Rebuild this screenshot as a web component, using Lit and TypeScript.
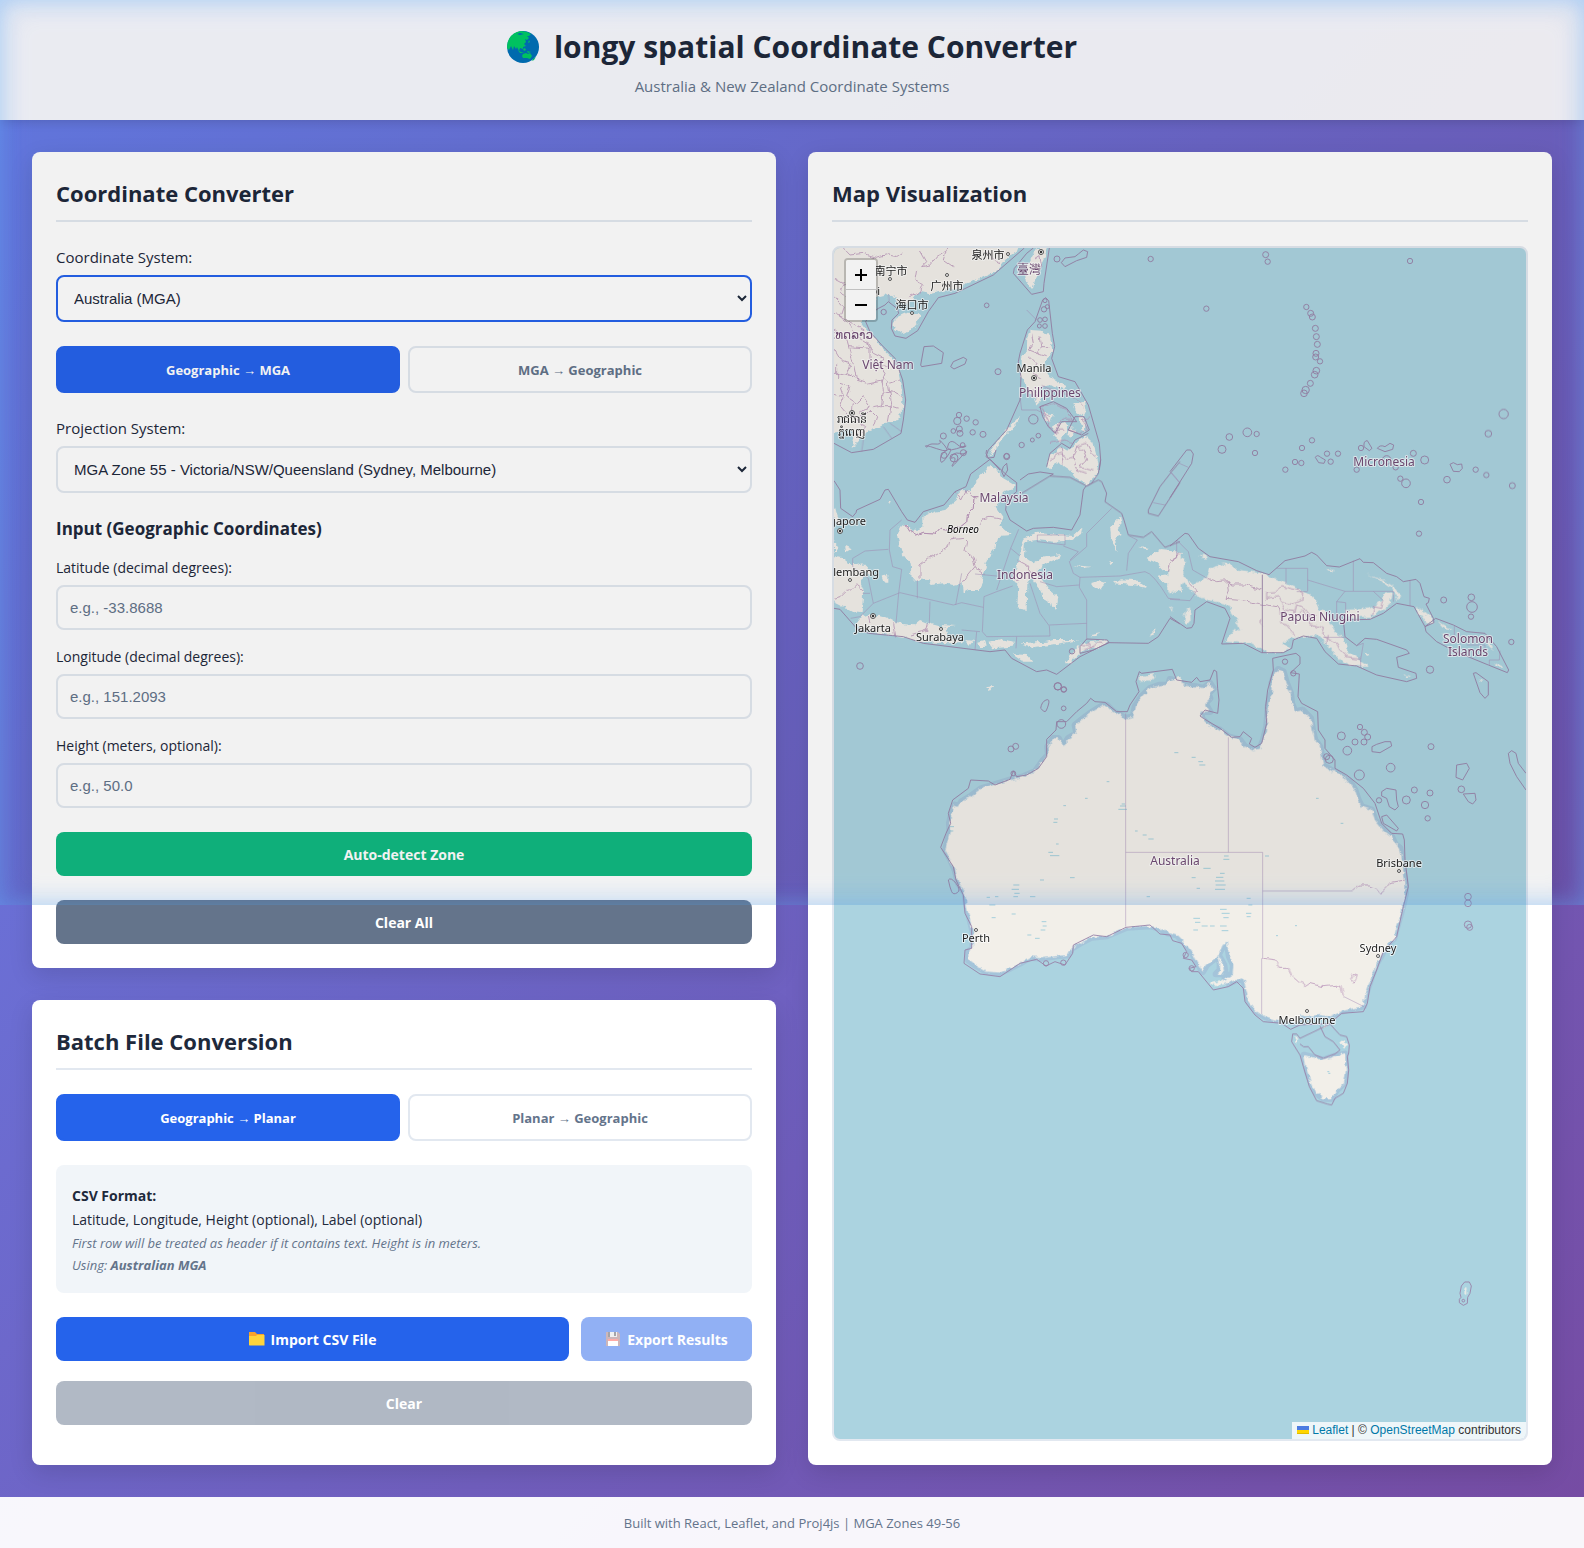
import { LitElement, html, svg, css } from "lit";
import { customElement, state } from "lit/decorators.js";
import { classMap } from "lit/directives/class-map.js";

type Ring = [number, number, number];

interface Tile {
  at: [number, number];
  land: string[];
  zones: string[];
  admin: string[];
  grid: string[];
  rings: Ring[];
}

interface Label {
  text: string;
  x: number;
  y: number;
  kind: "city" | "country" | "island";
  anchor?: "end";
}

/* Each tile is drawn at three units per map pixel; `at` is its offset in map pixels. */
const TILES: Tile[] = [
  {
    at: [-14, -18],
    land: [
      "M30 40H600L590 66 560 85 548 100 530 122 500 135 470 150 440 160 400 178 370 183 330 192 300 185 285 195 272 212 262 222 235 215 225 200 205 192 170 200 150 225 133 245 125 280 140 300 165 325 190 360 215 385 232 410 240 450 248 500 245 545 235 570 205 575 180 590 150 600 125 625 95 655 105 615 90 600 30 610Z",
      "M230 262 260 248 300 250 302 265 285 285 268 305 245 312 225 300 220 280Z",
      "M680 54 675 80 660 110 645 150 638 180 620 150 618 110 635 80 650 54Z",
      "M630 300 665 302 690 320 697 360 680 390 668 410 690 440 720 460 745 470 730 480 700 465 660 470 665 500 650 530 640 500 620 470 605 440 605 385 620 365 622 320Z",
      "M670 545 700 550 690 580 680 575ZM700 585 735 575 745 590 720 635 700 620ZM760 520 795 515 800 540 790 560 770 545ZM778 560 797 565 795 605 784 600ZM750 595 770 600 755 620 738 615ZM685 458 712 455 735 470 710 474Z",
      "M690 680 720 650 745 665 765 640 800 620 820 640 835 700 830 740 800 765 770 745 750 720 720 700 690 715 680 705Z",
      "M595 558 597 570 588 582 550 625 520 665 505 685 515 660 550 610Z",
    ],
    zones: [
      "M613 54 520 135 405 190 355 203 325 245 293 302 258 325 225 318 214 295 216 270 236 250 232 236 205 215 195 225Q150 245 137 275L150 305 185 345 225 385 248 450 257 510 250 570 243 610 160 658 95 668 42 640",
      "M688 54 672 160 670 185 635 193 580 130 583 115 620 70 640 54",
      "M677 203 668 210 645 275 622 300 600 370 595 395 603 440 600 510 560 600 505 660 498 680 512 690 540 720M677 203 686 212 697 310 704 350 695 385 715 440 765 455 805 525 838 640 842 690 838 720",
      "M312 350 340 348 370 368 365 400 305 410 302 405ZM392 410 400 395 430 382 440 388 435 402 402 417Z",
      "M724 98 735 84 765 80 775 72 790 60 803 65 800 82 770 92 735 110Z",
      "M320 652Q325 640 345 642T360 634 375 648 350 656 320 652ZM386 640Q395 628 410 642T436 650 410 656 386 640ZM362 680Q368 665 385 658T380 682 362 680ZM392 685Q400 665 418 670T440 666 415 690 400 700 392 685Z",
      "M660 530 700 515 740 535 770 575 725 575 705 610 685 590 668 560ZM745 600 785 615 808 600 792 560 765 560ZM680 710 690 670 725 640 750 655 765 630 805 610",
    ],
    admin: [
      "M70 54 90 75 130 70 170 82 200 74 230 80 250 66M300 60 320 95 305 110 330 105 350 80 380 60M380 54 370 90 400 110M290 120 285 150 310 160 300 185 265 200M500 60 520 90 540 100M42 145 70 160 60 185 90 200 80 235 105 250",
      "M42 200 70 230 60 260 90 285 110 320 150 345 160 370 190 385 175 405 195 430 185 460M42 300 80 330 100 400 110 450 140 460 185 450 190 480 185 525 160 530",
      "M42 360 60 390 90 400 80 430 115 450M60 460 90 470 80 500 110 520 130 500 150 530 120 550M42 490 70 500 60 530 85 560M190 440 210 460 240 450M190 490 215 485 245 500M180 530 210 530 240 540M150 540 170 560 160 590M110 570 140 590 125 610",
      "M42 250 80 270 130 300M90 350 150 355 150 400 130 420M50 400 50 450M160 400 200 410 230 400M42 430 100 440M70 500 60 470M100 520 95 560 130 560 150 540M205 460 215 520 205 575",
      "M635 310 640 340 625 360 650 370 665 350 660 320M665 350 690 350M630 380 650 400 640 430 665 440M650 370 680 380M645 90 660 80 665 110 645 130 630 120M640 480 655 490 650 505",
      "M690 690 720 670 740 690 760 680 770 650 790 660 800 690 780 710 820 720M760 680 770 720 800 730M800 640 815 670 830 680M720 650 730 700M770 650 800 640M700 600 730 600M665 470 700 480 740 490 770 510 790 530",
      "M660 530 700 520 740 540 760 570 720 570 710 610 690 590 675 560ZM745 600 780 610 800 600 790 570 810 560M690 640 730 630 760 640",
    ],
    grid: ["M205 192 208 215M245 605 210 580M130 630 125 665M190 590 215 625", "M620 240 650 270M600 500 605 540 650 540 690 560"],
    rings: [
      [191, 246, 8], [500, 226, 7], [534, 425, 9], [711, 87, 9], [992, 87, 8], [417, 555, 8], [412, 573, 11],
      [440, 566, 8], [467, 577, 8], [400, 603, 7], [418, 597, 9], [420, 610, 9], [458, 607, 8], [489, 613, 9],
      [370, 618, 9], [428, 645, 7], [675, 212, 6], [672, 238, 8], [682, 230, 6], [660, 270, 7], [675, 268, 7],
      [658, 288, 6], [675, 288, 7], [640, 568, 14], [605, 645, 8], [637, 630, 6], [655, 617, 7], [560, 680, 9],
    ],
  },
  {
    at: [-14, 202],
    land: [
      "M512 45 530 60 545 80 588 105 570 120 545 130 530 170 550 200 540 225 575 255 535 258 525 300 500 330 490 370 480 420 445 420 428 430 425 400 400 405 370 400 335 405 325 390 275 388 272 340 245 310 232 260 240 230 255 222 285 240 310 230 310 200 345 185 375 180 410 150 420 125 455 120 465 95 490 70Z",
      "M605 290 615 262 650 248 720 255 760 258 785 235 780 255 750 272 700 275 650 270 615 275 612 320 640 340 670 320 720 312 715 325 680 340 650 360 690 420 715 440 710 475 690 460 675 450 660 420 640 395 640 380 622 400 620 480 592 475 595 400 575 390 580 370 592 350Z",
      "M900 200 905 220 890 235 905 255 885 265 890 300 870 270 868 240 885 215ZM865 335 885 340 870 348ZM760 346 815 350 790 355Z",
      "M880 400 900 388 940 390 970 400 980 415 940 405ZM815 400 835 393 855 400 845 415 825 415Z",
      "M980 325 1020 300 1085 306 1085 362 1030 360 1010 340ZM1015 380 1085 370 1085 428 1050 415ZM955 290 995 298 975 300Z",
      "M30 320 75 325 80 345 130 345 135 360 120 395 130 420 125 490 95 485 60 465 30 450Z",
      "M125 500 150 492 200 505 230 520 280 525 300 510 325 520 365 530 380 535 385 560 420 570 430 580 380 580 300 575 250 560 180 550 120 540 110 520Z",
      "M365 525 405 528 370 533ZM435 570 460 572 450 585ZM475 575 495 570 500 590 480 592ZM505 575 540 568 585 575 575 590 520 595ZM600 580 680 575 700 570 780 570 690 585 640 592Z",
      "M575 612 620 615 637 635 610 635ZM780 580 865 570 840 590 780 610 750 640 735 635 760 605ZM985 560 1010 535 1005 552ZM810 555 845 550 820 562Z",
      "M185 380 205 375 205 395 190 395ZM110 345 130 340 155 370 150 375ZM30 130 50 200 68 225 42 215ZM42 270 55 290 42 310ZM75 285 95 295 78 305ZM202 150 212 150 208 162Z",
      "M495 712 520 708 510 722ZM955 680 1000 672 975 695ZM1040 690 1085 680 1085 722 1040 722Z",
    ],
    zones: [
      "M42 92 60 120 62 175 98 200 108 188 110 180 180 148 195 120 205 118 245 185 262 210 285 217 310 185 372 165 405 125 438 110 452 72 510 28 560 75 590 98 590 125 560 150 557 180 570 210 620 243 640 235 700 232 755 240 780 195 790 120 798 108",
      "M605 130 690 78 750 82 800 108 835 90 845 95 860 130 855 155 905 190 912 210 925 255 970 262 995 245 1035 292 1080 275M842 30 835 70 815 100 800 108",
      "M42 475 60 478 110 535 145 550 250 560 310 580 390 590 510 605 555 600 575 625 650 665 680 660 710 673 780 620 865 578 985 580 1015 560 1050 505 1080 522",
      "M780 590 800 567 862 570 867 578 820 600 780 610Z",
      "M1080 35 1055 65 1020 110 985 180 985 190 1015 198 1080 98",
      "M498 10 500 0M498 10 505 24 522 22 528 0M550 50 560 40 563 60 552 80 545 65ZM600 90 625 72 660 66 700 72 690 78",
    ],
    admin: [
      "M255 222 270 245 290 258 310 250 345 252 360 235 385 238 420 232 440 215 442 195 460 175 462 140 475 140",
      "M255 222 270 245 290 258 310 250 345 252 360 235 385 238 420 232 440 215 442 195 460 175 462 140 475 140",
      "M408 125 425 150 440 120 452 135 470 145",
      "M300 385 300 345 325 325 355 310 385 290 390 270 430 265 440 275 435 300 460 320 465 350 440 380 425 405M478 230 485 208 510 202 550 208M465 350 490 370",
      "M42 445 60 440 80 420 95 420 110 405 130 420M218 520 225 560M325 520 320 540 305 545 270 555M145 500 150 520",
      "M592 330 620 345 640 370 660 375M575 385 600 395M1045 365 1050 340 1080 310",
      "M785 590 800 580 810 595 830 578 850 580M790 600 820 590",
    ],
    grid: [
      "M596 238 572 295 530 420M572 295 600 318M245 210 210 240 208 300 218 350 245 358 236 430 228 520M98 325 135 303 205 298M98 325 98 350 145 385 160 460 120 500 92 505M128 430 150 430M240 428 160 460M240 428 400 465 425 458 490 472M292 390 292 445M425 370 407 465M330 455 328 520",
      "M492 440 530 425 578 408M492 440 487 545 500 560 690 558 688 528 660 490 630 400M688 525 800 520M800 450V570M780 382 778 412 800 450M780 382 900 378 975 365Q1000 370 1045 445L1080 448M920 362 925 310 952 270 928 258M875 175 800 250 800 290 748 335 760 370 780 382M778 405 710 410 660 395M652 255 735 255 735 285 652 275ZM730 288 775 305 750 330",
      "M465 372 530 378M470 545 465 600M590 560 588 595M425 540 480 545M1000 158 1035 165M1055 68 1080 98",
    ],
    rings: [[120, 648, 10], [713, 709, 11], [732, 718, 8], [756, 604, 8], [372, 16, 9], [402, 24, 12], [430, 8, 9], [560, 18, 8]],
  },
  {
    at: [336, -18],
    land: [
      "M-5 965 20 975 45 985 40 1030 60 1060 80 1060 110 1045 120 1015 165 1000 200 1018 277 1030 350 1062 400 1085 440 1110 450 1140 470 1150 480 1180 500 1210 520 1225 540 1270 560 1285 600 1310 570 1310 520 1300 490 1270 465 1240 440 1215 400 1220 370 1225 340 1235 360 1255 340 1268 290 1268 240 1240 165 1235 190 1200 210 1205 200 1165 165 1120 110 1110 75 1095 60 1075 40 1055 20 1080-5 1090Z",
      "M525 1140 600 1135 635 1110 640 1095 665 1090 660 1120 640 1140 600 1160 530 1162Z",
      "M586 1031 640 1050 670 1070 690 1095 685 1112 660 1070 630 1050Z",
      "M735 1130 755 1140 785 1165 788 1180 770 1180ZM468 1018 490 1016 488 1024ZM803 1173 848 1200 825 1198ZM945 1215 972 1260 958 1250ZM968 1296 1003 1314 985 1312ZM815 1210 845 1222 830 1224Z",
      "M45 1140 60 1135 62 1170 50 1185 40 1170ZM88 970 112 982 100 986ZM925 1345 945 1350 935 1353ZM0 1130 8 1132 6 1150ZM585 1265 600 1275 590 1280ZM700 1335 720 1338 710 1342Z",
    ],
    zones: [
      "M0 803 65 700 70 672 62 660 50 660 0 725",
      "M0 948 45 910 55 912 85 955 120 980 205 995 260 1022 297 1034 345 992 405 978 425 967 440 975 470 1007 508 1011 570 986 580 997 610 998 650 1030 680 1040 700 1055 738 1048 750 1060 762 1100 778 1105 775 1118 768 1122 790 1165 792 1178 765 1190",
      "M765 1190 797 1165 850 1185 890 1205 945 1210 980 1250 1016 1320 1012 1328 955 1305 850 1262 800 1235 768 1205Z",
      "M0 1160 50 1195 65 1193 72 1180 75 1140 110 1115 165 1135 180 1165 155 1242 220 1240 275 1268 340 1268 365 1255 370 1230 400 1218 440 1225 465 1265 505 1302 560 1308 620 1335 710 1355 740 1345 738 1330 685 1312 680 1282 718 1270 710 1260 620 1228 585 1225 560 1247 525 1220 520 1170 600 1168 640 1150 680 1120 732 1130 765 1190",
      "M840 703 850 698 862 704 875 702 877 715 868 725 850 724ZM622 655Q630 643 645 650L660 640 671 645 668 658 645 665ZM582 650Q580 632 592 632L606 655 598 662ZM436 682Q442 672 452 682L466 690 462 700 446 698Z",
      "M277 1034V1268",
    ],
    admin: [
      "M0 990 20 985 25 975M60 1060 80 1080 70 1090M112 1045 140 1055 175 1052 185 1065 230 1065 275 1080M175 1052 178 1085 168 1108 220 1112 275 1122 320 1130 330 1145 350 1155 380 1170",
      "M290 1090 315 1088 335 1070 380 1080 398 1085 395 1108 370 1120 335 1115 325 1100 290 1105ZM335 1120 345 1140 375 1145 380 1125 400 1130 415 1150 440 1160M330 1145 332 1180 350 1185 375 1215M415 1150 420 1180 460 1195 455 1215 480 1230 500 1240 510 1260 530 1280 572 1285M380 1155 400 1140 410 1160 430 1150",
      "M605 1155 610 1130 635 1135 640 1110M275 1170 272 1180 277 1185M475 1215 470 1240",
    ],
    grid: [
      "M0 725 28 758M28 700 55 712M320 1015H413V1083M348 1015V1062M413 1050 525 1084H670V1115M550 992V1083M610 1084 640 1112M500 1115 525 1084M720 1050V1128M500 1115 527 1118V1165L500 1162ZM460 1222H525M560 1247 580 1240 572 1290V1310M20 930 55 965 68 1020 112 1045M20 930V985M853 1188V1215M890 1245H945V1258M990 1262 988 1290H958V1305M0 1108 60 1112 75 1090M380 1085H413",
    ],
    rings: [
      [287, 74, 9], [293, 95, 8], [720, 93, 8], [109, 236, 8], [409, 231, 8], [422, 250, 9], [427, 261, 9],
      [436, 295, 9], [439, 320, 9], [442, 343, 9], [438, 370, 9], [437, 381, 9], [450, 394, 8], [439, 422, 10],
      [434, 434, 10], [421, 460, 9], [407, 480, 11], [402, 490, 10], [1001, 552, 14], [955, 611, 10], [178, 621, 10],
      [232, 607, 13], [260, 612, 8], [156, 658, 12], [255, 669, 8], [426, 631, 8], [396, 654, 8], [471, 671, 8],
      [504, 671, 8], [375, 696, 8], [394, 699, 8], [482, 695, 8], [346, 719, 8], [573, 654, 8], [730, 670, 9],
      [764, 690, 12], [560, 719, 8], [650, 690, 13], [677, 712, 8], [691, 746, 8], [708, 760, 13], [753, 816, 8],
      [747, 911, 8], [831, 749, 10], [917, 719, 8], [949, 735, 8], [1027, 767, 9], [821, 1110, 9], [904, 1102, 10],
      [906, 1131, 16], [903, 1160, 8], [1024, 1236, 8], [780, 1319, 11],
    ],
  },
  {
    at: [86, 402],
    land: [
      "M1075 58 1090 65 1100 100 1112 130 1115 160 1125 185 1148 180 1172 205 1178 240 1185 270 1200 290 1205 320 1210 348 1230 358 1260 375 1290 395 1305 420 1315 450 1325 470 1355 480 1365 510 1390 540 1415 560 1425 582 1440 595 1445 620 1450 660 1455 690 1457 730 1448 770 1440 800 1428 840 1422 865 1400 885 1385 915 1370 940 1355 980 1345 1010 1335 1040 1332 1068 1300 1075 1260 1085 1230 1100 1200 1095 1155 1098 1145 1095 1130 1120 1100 1110 1070 1110 1035 1100 1010 1085 985 1055 980 1025 970 985 945 992 925 1000 915 985 938 970 940 945 928 920 920 875 905 895 895 915 912 945 915 965 905 972 888 972 900 960 900 940 893 915 885 925 860 945 848 965 830 935 815 905 795 880 770 855 745 850 720 835 690 828 620 832 560 858 515 862 480 880 455 895 445 915 410 918 365 925 330 922 300 940 270 955 240 968 200 965 165 945 145 930 145 905 158 895 160 850 150 810 140 770 135 730 115 700 105 660 92 630 76 600 84 570 90 545 88 520 95 490 105 465 112 475 125 455 150 440 185 415 230 402 270 390 310 380 345 365 370 330 385 315 383 290 400 265 415 265 430 290 445 265 470 250 465 225 490 205 510 190 545 168 560 165 580 185 600 195 615 205 640 200 645 170 665 140 690 115 720 105 745 105 750 88 775 95 800 108 830 110 850 115 870 100 880 115 865 130 870 145 855 160 870 185 845 185 845 205 870 230 900 240 925 260 960 270 975 290 1000 300 1020 295 1030 270 1040 230 1042 200 1045 160 1058 120 1055 100 1065 70Z",
      "M655 85 680 75 705 80 690 95 660 95ZM876 995 905 990 930 998 910 1004 880 1005Z",
      "M1152 1215 1190 1225 1210 1230 1245 1218 1275 1212 1278 1260 1272 1300 1250 1320 1235 1345 1210 1345 1190 1330 1175 1300 1162 1265Z",
      "M1126 1160 1134 1160 1132 1182 1126 1180ZM1262 1168 1272 1172 1280 1190 1268 1192 1262 1180ZM1210 1128 1222 1124 1216 1136Z",
    ],
    zones: [
      "M1058 25 1080 20 1128 10 1140 20 1140 42 1112 68 1138 72 1134 140 1145 160 1193 185 1195 240 1215 270 1215 295 1245 330 1245 355 1280 375 1330 415 1365 460 1385 520 1415 550 1448 552 1453 570 1455 630 1465 710 1450 770 1430 860 1390 905 1370 960 1350 1010 1342 1060 1330 1085 1265 1090 1230 1120 1200 1122 1140 1125 1112 1138 1085 1120 1030 1115 1005 1095 975 1055 970 1015 950 995 925 1010 880 1020 835 965 815 965 808 955 828 950 815 930 790 925 800 905 785 880 758 872 750 855 720 852 690 825 618 832 560 860 520 855 460 885 458 910 435 945 405 935 378 948 350 928 300 940 240 980 180 972 132 940 135 900 155 895 155 830 135 790 130 735 108 690 100 650 62 592 78 550 92 520 85 490 98 450 145 415 152 390 205 393 225 405 270 388 280 363 290 380 320 375 355 355 380 320 380 268 408 240 410 215 440 215 470 185 500 160 512 145 525 155 555 157 590 185 622 185 630 165 657 125 648 95 658 65 665 70 757 58 770 90 815 97 830 82 840 95 870 90 882 60 890 65 893 115 897 150 893 190 855 180 840 198 850 205 900 235 935 262 960 260 970 245 995 265 988 282 1005 292 1025 280 1040 220 1037 170 1043 120 1060 60Z",
      "M1140 1182Q1150 1195 1165 1190L1185 1215 1210 1225 1245 1212 1260 1200 1240 1175 1215 1160 1200 1128M1230 1122 1260 1155 1280 1160 1288 1185 1286 1210 1282 1220 1286 1260 1282 1300 1270 1330 1245 1345 1235 1365 1222 1362 1190 1352 1168 1310 1150 1250 1140 1215 1115 1175 1118 1152 1130 1152 1140 1165Z",
      "M1356 290 1370 283 1395 275 1412 275 1415 288 1380 308 1356 305ZM1385 425 1400 415 1428 420 1430 450 1435 470 1425 480 1408 470 1400 445 1385 438ZM1385 500 1400 495 1435 535 1430 543 1390 520Z",
      "M1610 345 1640 340 1648 355 1628 390 1608 382ZM1818 370 1795 340 1788 310 1775 302 1765 310 1770 340 1790 380 1818 420M1630 432 1665 430 1668 450 1658 462 1645 455ZM1660 70 1668 68 1705 95 1705 135 1695 145 1680 128Z",
      "M362 175Q365 155 378 150T385 165 375 185 362 175ZM85 690Q92 680 108 700T112 728 95 725 85 690Z",
    ],
    admin: [
      "M1298 723 1315 708 1350 708 1370 715 1380 730 1400 712 1410 698 1455 690M1027 925 1065 930 1080 955 1105 955 1115 975 1155 1010 1170 1000 1210 1010 1262 1005 1272 1040M1292 985 1300 970 1312 975 1300 1000Z",
    ],
    grid: ["M617 190V830M617 607H1028M925 262V607M1028 607V925M1025 925V1092M1028 723H1298M1272 1040 1332 1070"],
    rings: [
      [414, 109, 11], [431, 119, 8], [431, 175, 7], [424, 222, 13], [273, 297, 9], [287, 289, 9], [1264, 258, 12],
      [1320, 231, 8], [1333, 247, 9], [1343, 261, 9], [1305, 276, 9], [1332, 276, 9], [1282, 302, 13], [1533, 290, 9],
      [1412, 353, 13], [1318, 375, 15], [1377, 451, 8], [1483, 420, 9], [1530, 429, 9], [1459, 450, 12], [1515, 465, 11],
      [1523, 505, 8], [1624, 418, 10], [1644, 740, 10], [1644, 760, 10], [1644, 824, 11], [1649, 832, 9], [378, 940, 8],
      [430, 938, 8], [280, 370, 7], [797, 915, 8], [815, 955, 8], [1095, 35, 8], [1120, 70, 8], [1220, 320, 9], [1228, 328, 12],
    ],
  },
  {
    at: [366, 1012],
    land: ["M797 82 800 90 796 102 793 92Z"],
    zones: ["M783 112 780 100 784 78 794 66 808 66 814 78 810 100 803 112 802 130 790 136 778 128 778 118Z"],
    admin: [],
    grid: [],
    rings: [[790, 122, 4]],
  },
];

/* Salt lakes, as [x, y, width] in the Australian tile. */
const LAKES: Ring[] = [
  [763, 308, 12], [815, 322, 12], [835, 335, 14], [838, 345, 18], [600, 468, 18], [595, 478, 26], [605, 462, 10],
  [402, 507, 12], [400, 517, 12], [645, 543, 8], [668, 555, 12], [685, 567, 16], [408, 582, 8], [385, 607, 14],
  [390, 617, 28], [90, 530, 12], [88, 543, 12], [888, 682, 22], [885, 693, 28], [887, 705, 30], [885, 718, 30],
  [900, 670, 14], [910, 628, 18], [912, 618, 14], [280, 705, 18], [275, 718, 22], [283, 730, 16], [280, 740, 14],
  [330, 740, 16], [200, 742, 10], [225, 740, 10], [208, 765, 18], [365, 815, 14], [368, 828, 12], [362, 840, 14],
  [322, 855, 12], [345, 865, 14], [275, 792, 12], [215, 803, 12], [680, 740, 10], [900, 778, 20], [905, 790, 24],
  [910, 803, 16], [820, 805, 20], [825, 817, 16], [845, 828, 18], [870, 828, 14], [900, 828, 20], [820, 840, 14],
  [905, 842, 20], [980, 745, 12], [985, 765, 12], [978, 790, 16], [980, 800, 12], [430, 467, 8], [495, 445, 8],
  [560, 395, 8], [1035, 618, 12], [1188, 445, 8], [1262, 520, 8], [1125, 827, 6], [1068, 857, 6], [850, 655, 22],
  [815, 683, 12], [830, 715, 10], [360, 690, 12], [450, 683, 14], [1225, 1270, 6], [1222, 1265, 6],
];

const LABELS: Label[] = [
  { text: "泉州市", x: 154, y: 11, kind: "city" },
  { text: "南宁市", x: 57, y: 27, kind: "city" },
  { text: "广州市", x: 113, y: 42, kind: "city" },
  { text: "海口市", x: 78, y: 61, kind: "city" },
  { text: "Hà Nội", x: 46, y: 47, kind: "city", anchor: "end" },
  { text: "臺灣", x: 195, y: 26, kind: "country" },
  { text: "ປະເທດລາວ", x: 39, y: 91, kind: "country", anchor: "end" },
  { text: "Việt Nam", x: 54, y: 121, kind: "country" },
  { text: "Manila", x: 200, y: 124, kind: "city" },
  { text: "Philippines", x: 216, y: 149, kind: "country" },
  { text: "រាជធានី", x: 18, y: 175, kind: "city" },
  { text: "ភ្នំពេញ", x: 17, y: 188, kind: "city" },
  { text: "Malaysia", x: 170, y: 254, kind: "country" },
  { text: "Borneo", x: 129, y: 285, kind: "island" },
  { text: "Singapore", x: 32, y: 277, kind: "city", anchor: "end" },
  { text: "Palembang", x: 45, y: 328, kind: "city", anchor: "end" },
  { text: "Jakarta", x: 39, y: 384, kind: "city" },
  { text: "Surabaya", x: 106, y: 393, kind: "city" },
  { text: "Indonesia", x: 191, y: 331, kind: "country" },
  { text: "Micronesia", x: 550, y: 218, kind: "country" },
  { text: "Papua Niugini", x: 486, y: 373, kind: "country" },
  { text: "Solomon", x: 634, y: 395, kind: "country" },
  { text: "Islands", x: 634, y: 408, kind: "country" },
  { text: "Australia", x: 341, y: 617, kind: "country" },
  { text: "Perth", x: 142, y: 694, kind: "city" },
  { text: "Brisbane", x: 565, y: 619, kind: "city" },
  { text: "Sydney", x: 544, y: 704, kind: "city" },
  { text: "Melbourne", x: 473, y: 776, kind: "city" },
];

const TOWNS: [number, number][] = [
  [174, 6], [113, 27], [56, 31], [78, 65], [107, 381], [16, 332], [142, 682], [565, 623], [544, 708], [473, 763],
];
const CAPITALS: [number, number][] = [[207, 4], [200, 130], [18, 165], [6, 283], [39, 368]];

@customElement("spatial-map")
export class SpatialMap extends LitElement {
  static styles = css`
    :host {
      display: block;
      position: relative;
      box-sizing: border-box;
      overflow: hidden;
      border: 2px solid #e2e8f0;
      border-radius: 8px;
      background: #abd3e0;
    }
    .canvas {
      display: block;
      position: absolute;
      inset: 0;
      width: 100%;
      height: 100%;
    }
    .land { fill: #f2efe9; }
    .halo { fill: none; stroke: #9db6d3; stroke-width: 20; stroke-linejoin: round; opacity: 0.5; }
    .zone { fill: none; stroke: #9882a8; stroke-width: 3; stroke-linejoin: round; opacity: 0.9; }
    .admin { fill: none; stroke: #b891b8; stroke-width: 3; opacity: 0.75; }
    .grid { fill: none; stroke: #a68fb8; stroke-width: 3; opacity: 0.5; }
    .lake { stroke: #a5cfdc; stroke-width: 3; }
    .label {
      font: 11px "Noto Sans", "Noto Sans CJK SC", "DejaVu Sans", sans-serif;
      text-anchor: middle;
      fill: #222;
      stroke: rgba(255, 255, 255, 0.7);
      stroke-width: 2px;
      stroke-linejoin: round;
      paint-order: stroke;
    }
    .country { font-size: 12px; fill: #704b74; }
    .island { font-size: 10px; font-style: italic; fill: #000; }
    .end { text-anchor: end; }
    .town { fill: #fff; stroke: #555; }
    .dot { fill: #333; }
    .zoom {
      position: absolute;
      top: 10px;
      left: 10px;
      display: flex;
      flex-direction: column;
      border: 2px solid rgba(0, 0, 0, 0.2);
      border-radius: 4px;
      background-clip: padding-box;
    }
    .step {
      width: 30px;
      height: 30px;
      padding: 0;
      border: 0;
      background: #fff;
      color: #000;
      display: grid;
      place-items: center;
    }
    .step:first-child { border-bottom: 1px solid #ccc; border-radius: 2px 2px 0 0; }
    .step:last-child { border-radius: 0 0 2px 2px; }
    .sign { width: 12px; height: 12px; stroke: #000; stroke-width: 2; }
    .credit {
      position: absolute;
      right: 0;
      bottom: 0;
      padding: 0 5px;
      background: rgba(255, 255, 255, 0.8);
      color: #333;
      font: 12px/17px "Liberation Sans", Arial, sans-serif;
    }
    .credit a { color: #0078a8; text-decoration: none; }
    .flag { width: 12px; height: 8px; }
  `;

  private paths(kind: "land" | "zones" | "admin" | "grid", name: string) {
    return TILES.map(
      (t) => svg`<g transform="translate(${t.at[0]} ${t.at[1]}) scale(0.33333)">
        ${t[kind].map((d) => svg`<path class=${name} d=${d}></path>`)}
      </g>`,
    );
  }

  render() {
    return html`
      <svg class="canvas" role="img" aria-label="Map">
        <defs>
          <filter id="coast" x="-2%" y="-2%" width="104%" height="104%" color-interpolation-filters="sRGB">
            <feTurbulence type="fractalNoise" baseFrequency="0.16" numOctaves="3" seed="4"></feTurbulence>
            <feDisplacementMap in="SourceGraphic" scale="6" xChannelSelector="R" yChannelSelector="G"></feDisplacementMap>
          </filter>
          <filter id="wiggle" x="-2%" y="-2%" width="104%" height="104%" color-interpolation-filters="sRGB">
            <feTurbulence type="fractalNoise" baseFrequency="0.12" numOctaves="2" seed="9"></feTurbulence>
            <feDisplacementMap in="SourceGraphic" scale="6" xChannelSelector="R" yChannelSelector="G"></feDisplacementMap>
          </filter>
        </defs>
        <g transform="translate(86 402) scale(0.33333)">
          <path class="halo" d=${TILES[3].land[0]}></path>
          <path class="halo" d=${TILES[3].land[2]}></path>
        </g>
        <g filter="url(#coast)">${this.paths("land", "land")}</g>
        <g transform="translate(86 402) scale(0.33333)">
          ${LAKES.map(([x, y, w]) => svg`<path class="lake" d="M${x} ${y}h${w}"></path>`)}
        </g>
        ${this.paths("grid", "grid")}
        <g filter="url(#wiggle)">${this.paths("admin", "admin")}</g>
        ${this.paths("zones", "zone")}
        ${TILES.map(
          (t) => svg`<g transform="translate(${t.at[0]} ${t.at[1]}) scale(0.33333)">
            ${t.rings.map(([x, y, r]) => svg`<circle class="zone" cx=${x} cy=${y} r=${r}></circle>`)}
          </g>`,
        )}
        ${TOWNS.map(([x, y]) => svg`<circle class="town" cx=${x} cy=${y} r="1.5"></circle>`)}
        ${CAPITALS.map(
          ([x, y]) => svg`<circle class="town" cx=${x} cy=${y} r="2.5"></circle><circle class="dot" cx=${x} cy=${y} r="1.2"></circle>`,
        )}
        ${LABELS.map(
          (l) => svg`<text class="label ${l.kind} ${l.anchor ?? ""}" x=${l.x} y=${l.y}>${l.text}</text>`,
        )}
      </svg>
      <div class="zoom">
        <button class="step" type="button" aria-label="Zoom in">
          <svg class="sign" viewBox="0 0 12 12"><path d="M0 6h12M6 0v12"></path></svg>
        </button>
        <button class="step" type="button" aria-label="Zoom out">
          <svg class="sign" viewBox="0 0 12 12"><path d="M0 6h12"></path></svg>
        </button>
      </div>
      <div class="credit">
        <svg class="flag" viewBox="0 0 12 8" aria-hidden="true">
          <path fill="#4c7be1" d="M0 0h12v4H0z"></path>
          <path fill="#ffd500" d="M0 4h12v3H0z"></path>
          <path fill="#e0bc00" d="M0 7h12v1H0z"></path>
        </svg>
        <a href="#leaflet">Leaflet</a> | © <a href="#osm">OpenStreetMap</a> contributors
      </div>
    `;
  }
}

@customElement("app-root")
export class AppRoot extends LitElement {
  @state() private reverse = false;
  @state() private batchReverse = false;

  static styles = css`
    * { box-sizing: border-box; }
    :host {
      display: flex;
      flex-direction: column;
      position: relative;
      min-height: 100vh;
      background: linear-gradient(135deg, #667eea 0%, #764ba2 100%);
      color: #1e293b;
      font-family: "Segoe UI", "Open Sans", "Noto Sans", sans-serif;
    }
    h1, h2, h3, p { margin: 0; }
    .header {
      padding: 25px 24px 23px;
      background: rgba(255, 255, 255, 0.95);
      box-shadow: 0 2px 10px rgba(0, 0, 0, 0.15);
      text-align: center;
    }
    .title {
      display: flex;
      justify-content: center;
      align-items: center;
      gap: 15px;
      margin-bottom: 8px;
      font-size: 30px;
      line-height: 43px;
      font-weight: 700;
    }
    .globe { width: 32px; height: 32px; }
    .subtitle { font-size: 15px; line-height: 21px; color: #64748b; }
    .main {
      flex: 1;
      display: grid;
      grid-template-columns: 1fr 1fr;
      gap: 32px;
      padding: 32px;
    }
    .column { display: flex; flex-direction: column; gap: 32px; }
    .card {
      display: flex;
      flex-direction: column;
      gap: 24px;
      padding: 24px;
      border-radius: 8px;
      background: #fff;
      box-shadow: 0 8px 24px rgba(0, 0, 0, 0.12);
    }
    .batch { flex: 1; padding-bottom: 40px; }
    .heading {
      padding: 1px 0 11px;
      border-bottom: 2px solid #e2e8f0;
      font-size: 22px;
      line-height: 32px;
      font-weight: 700;
    }
    .field { display: flex; flex-direction: column; gap: 6px; }
    .label { font-size: 15px; line-height: 23px; font-weight: 500; }
    .small { font-size: 14px; line-height: 22px; }
    .select, .input {
      width: 100%;
      border: 2px solid #e2e8f0;
      border-radius: 8px;
      background: #fff;
      color: #1e293b;
      font-family: "Liberation Sans", Arial, sans-serif;
      font-size: 15px;
      outline: none;
    }
    .select { height: 47px; padding: 12px; }
    .input { height: 45px; padding: 12px; }
    .input::placeholder { color: #64748b; }
    .focused { border-color: #2563eb; }
    .modes { display: grid; grid-template-columns: 1fr 1fr; gap: 8px; }
    .mode {
      height: 47px;
      border: 2px solid #e2e8f0;
      border-radius: 8px;
      background: #fff;
      color: #64748b;
      font: 700 13px "Segoe UI", "Open Sans", "Noto Sans", sans-serif;
    }
    .active { border-color: #2563eb; background: #2563eb; color: #fff; }
    .inputs { display: flex; flex-direction: column; gap: 16px; }
    .subheading { font-size: 17px; line-height: 24px; font-weight: 700; }
    .button {
      display: flex;
      justify-content: center;
      align-items: center;
      gap: 6px;
      height: 44px;
      padding: 0;
      border: 0;
      border-radius: 8px;
      background: #2563eb;
      color: #fff;
      font: 700 14px "Segoe UI", "Open Sans", "Noto Sans", sans-serif;
    }
    .button:disabled { opacity: 0.5; }
    .detect { background: #10b981; }
    .clear { background: #64748b; }
    .icon { width: 16px; height: 16px; }
    .format {
      padding: 19px 16px 17px;
      border-radius: 8px;
      background: #f1f5f9;
      font-size: 14px;
      line-height: 24px;
    }
    .note { font-size: 13px; line-height: 22px; font-style: italic; color: #64748b; }
    .actions { display: flex; flex-direction: column; gap: 20px; }
    .files { display: grid; grid-template-columns: 3fr 1fr; gap: 12px; }
    .map { flex: 1; }
    .footer {
      padding: 17px 16px 15px;
      background: rgba(255, 255, 255, 0.95);
      color: #64748b;
      font-size: 13px;
      line-height: 19px;
      text-align: center;
    }
    .glow {
      position: absolute;
      top: 0;
      left: 0;
      right: 0;
      height: 905px;
      pointer-events: none;
      background: rgba(0, 0, 0, 0.05);
      box-shadow:
        inset 0 0 20px rgba(110, 180, 250, 0.35),
        inset 0 0 32px rgba(80, 150, 246, 0.25);
    }
  `;

  private input(id: string, label: string, hint: string) {
    return html`<div class="field">
      <label class="label small" for=${id}>${label}</label>
      <input class="input" id=${id} type="text" placeholder=${hint} />
    </div>`;
  }

  private modes(first: string, second: string, reversed: boolean, pick: (r: boolean) => void) {
    return html`<div class="modes">
      <button type="button" class=${classMap({ mode: true, active: !reversed })} @click=${() => pick(false)}>${first}</button>
      <button type="button" class=${classMap({ mode: true, active: reversed })} @click=${() => pick(true)}>${second}</button>
    </div>`;
  }

  render() {
    return html`
      <header class="header">
        <h1 class="title">
          <svg class="globe" viewBox="0 0 32 32" aria-hidden="true">
            <circle cx="16" cy="16" r="16" fill="#0070b8"></circle>
            <path fill="#00cc66" d="M10 1 14 0 20 1 24 3 22 5 20 5 22 7 20 9 18 8 19 11 17 13 19 15 16 16 16 18 13 17 12 20 10 16 9 18 7 15 6 19 4 15 2 19 0 17Q0 5 10 1ZM10 3 13 4 17 3 13 2Z"></path>
            <path fill="#00cc66" d="M11 19 14 21 17 22 13 22ZM17 17 19 18 18 20 16 19ZM20 20 24 21 21 22ZM16 23 19 22 21 23 23 22 25 25 23 28 20 27 16 27 15 25ZM26 28 29 26 27 29 25 30ZM21 12 22 9 23 11Z"></path>
          </svg>
          <span>longy spatial Coordinate Converter</span>
        </h1>
        <p class="subtitle">Australia &amp; New Zealand Coordinate Systems</p>
      </header>

      <main class="main">
        <div class="column">
          <section class="card">
            <h2 class="heading">Coordinate Converter</h2>
            <div class="field">
              <label class="label" for="system">Coordinate System:</label>
              <select class="select focused" id="system">
                <option>Australia (MGA)</option>
              </select>
            </div>
            ${this.modes("Geographic → MGA", "MGA → Geographic", this.reverse, (r) => (this.reverse = r))}
            <div class="field">
              <label class="label" for="projection">Projection System:</label>
              <select class="select" id="projection">
                <option>MGA Zone 55 - Victoria/NSW/Queensland (Sydney, Melbourne)</option>
              </select>
            </div>
            <div class="inputs">
              <h3 class="subheading">Input (Geographic Coordinates)</h3>
              ${this.input("lat", "Latitude (decimal degrees):", "e.g., -33.8688")}
              ${this.input("lon", "Longitude (decimal degrees):", "e.g., 151.2093")}
              ${this.input("height", "Height (meters, optional):", "e.g., 50.0")}
            </div>
            <button class="button detect" type="button">Auto-detect Zone</button>
            <button class="button clear" type="button">Clear All</button>
          </section>

          <section class="card batch">
            <h2 class="heading">Batch File Conversion</h2>
            ${this.modes("Geographic → Planar", "Planar → Geographic", this.batchReverse, (r) => (this.batchReverse = r))}
            <div class="format">
              <p><strong>CSV Format:</strong></p>
              <p>Latitude, Longitude, Height (optional), Label (optional)</p>
              <p class="note">First row will be treated as header if it contains text. Height is in meters.</p>
              <p class="note">Using: <strong>Australian MGA</strong></p>
            </div>
            <div class="actions">
              <div class="files">
                <button class="button" type="button">
                  <svg class="icon" viewBox="0 0 16 16" aria-hidden="true">
                    <path fill="#f8a22c" d="M0 1h6l2 2h7v4H0z"></path>
                    <path fill="#ffd43b" d="M0 5h7l1-1h7.500v10.500H.5L0 14z"></path>
                  </svg>
                  Import CSV File
                </button>
                <button class="button" type="button" disabled>
                  <svg class="icon" viewBox="0 0 16 16" aria-hidden="true">
                    <path fill="#9b6f78" d="M1 1h12l2 2v12H1z"></path>
                    <path fill="#e4e4e4" d="M4 1h8v5H4z"></path>
                    <path fill="#4b4b55" d="M3 1h2v5H3zM9 1h2v4H9z"></path>
                    <path fill="#fff" d="M3 8h10v7H3z"></path>
                    <path fill="#ff5a50" d="M3 8h10v2H3z"></path>
                  </svg>
                  Export Results
                </button>
              </div>
              <button class="button clear" type="button" disabled>Clear</button>
            </div>
          </section>
        </div>

        <section class="card">
          <h2 class="heading">Map Visualization</h2>
          <spatial-map class="map"></spatial-map>
        </section>
      </main>

      <footer class="footer">Built with React, Leaflet, and Proj4js | MGA Zones 49-56</footer>
      <div class="glow"></div>
    `;
  }
}
